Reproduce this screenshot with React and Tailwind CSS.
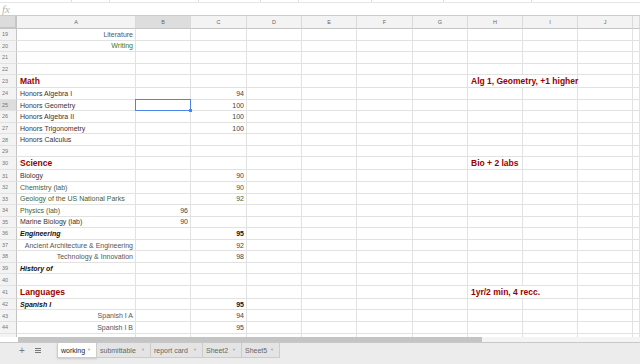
import React from "react";

const GRID =
  "grid grid-cols-[17px_119px_55px_56px_55px_55px_56px_55px_55px_55px_55px_7px]";
const LETTERS = ["A", "B", "C", "D", "E", "F", "G", "H", "I", "J", "K"];

const RED = "font-bold text-[8.5px] text-[#990000]";
const DARK = "text-[#3a3035]";
const GREEN = "text-[#44613a]";
const GRAY = "text-[#555555]";
const NUM = "text-[#444444]";

// row data: n = row number, tall = section heading row, spill = H text runs into I
const rows = [
  { n: 19, cells: { A: { t: "Literature", right: true, cls: GRAY } } },
  { n: 20, cells: { A: { t: "Writing", right: true, cls: "text-[#38761d]" } } },
  { n: 21 },
  { n: 22 },
  {
    n: 23,
    tall: true,
    spill: true,
    cells: {
      A: { t: "Math", cls: RED },
      H: { t: "Alg 1, Geometry, +1 higher", cls: RED },
    },
  },
  { n: 24, cells: { A: { t: "Honors Algebra I", cls: DARK }, C: { t: "94", right: true, cls: NUM } } },
  { n: 25, sel: true, cells: { A: { t: "Honors Geometry", cls: DARK }, C: { t: "100", right: true, cls: NUM } } },
  { n: 26, cells: { A: { t: "Honors Algebra II", cls: DARK }, C: { t: "100", right: true, cls: NUM } } },
  { n: 27, cells: { A: { t: "Honors Trigonometry", cls: DARK }, C: { t: "100", right: true, cls: NUM } } },
  { n: 28, cells: { A: { t: "Honors Calculus", cls: DARK } } },
  { n: 29 },
  {
    n: 30,
    tall: true,
    cells: {
      A: { t: "Science", cls: RED },
      H: { t: "Bio + 2 labs", cls: RED },
    },
  },
  { n: 31, cells: { A: { t: "Biology", cls: DARK }, C: { t: "90", right: true, cls: NUM } } },
  { n: 32, cells: { A: { t: "Chemistry (lab)", cls: GREEN }, C: { t: "90", right: true, cls: GREEN } } },
  { n: 33, cells: { A: { t: "Geology of the US National Parks", cls: GREEN }, C: { t: "92", right: true, cls: GREEN } } },
  { n: 34, cells: { A: { t: "Physics (lab)", cls: GREEN }, B: { t: "96", right: true, cls: NUM } } },
  { n: 35, cells: { A: { t: "Marine Biology (lab)", cls: DARK }, B: { t: "90", right: true, cls: NUM } } },
  {
    n: 36,
    cells: {
      A: { t: "Engineering", cls: "font-bold italic text-[#111111]" },
      C: { t: "95", right: true, cls: "font-bold text-[#111111]" },
    },
  },
  { n: 37, cells: { A: { t: "Ancient Architecture & Engineering", right: true, cls: GRAY }, C: { t: "92", right: true, cls: NUM } } },
  { n: 38, cells: { A: { t: "Technology & Innovation", right: true, cls: GRAY }, C: { t: "98", right: true, cls: NUM } } },
  { n: 39, cells: { A: { t: "History of", cls: "font-bold italic text-[#111111]" } } },
  { n: 40 },
  {
    n: 41,
    tall: true,
    spill: true,
    cells: {
      A: { t: "Languages", cls: RED },
      H: { t: "1yr/2 min, 4 recc.", cls: RED },
    },
  },
  {
    n: 42,
    cells: {
      A: { t: "Spanish I", cls: "font-bold italic text-[#111111]" },
      C: { t: "95", right: true, cls: "font-bold text-[#111111]" },
    },
  },
  { n: 43, cells: { A: { t: "Spanish I A", right: true, cls: GRAY }, C: { t: "94", right: true, cls: NUM } } },
  { n: 44, cells: { A: { t: "Spanish I B", right: true, cls: GRAY }, C: { t: "95", right: true, cls: NUM } } },
  { n: 45 },
];

function Row({ n, tall, spill, sel, cells = {} }) {
  return (
    <div className={`${GRID} ${tall ? "h-[13px]" : "h-[11.55px]"}`}>
      <div
        className={`flex items-center pl-[2px] border-r border-b border-r-[#c4c4c4] border-b-[#e2e2e2] text-[5.5px] text-[#777777] ${
          sel ? "bg-[#dddddd]" : "bg-[#f3f3f3]"
        }`}
      >
        {n < 45 ? n : ""}
      </div>
      {LETTERS.map((L) => {
        const c = cells[L];
        const rb = spill && L === "H" ? "border-r-0" : "border-r";
        const isSel = sel && L === "B";
        return (
          <div
            key={L}
            className={`relative flex items-center whitespace-nowrap overflow-visible leading-none text-[7px] border-b border-[#e2e2e2] ${rb} ${
              c && c.right ? "justify-end pr-[2px]" : "pl-[3px]"
            }`}
          >
            {c && <span className={`relative z-10 ${c.cls}`}>{c.t}</span>}
            {isSel && (
              <div className="absolute -left-px -top-px -right-px -bottom-px border border-[#4a86e8] z-20">
                <div className="absolute -right-[2px] -bottom-[2px] w-[3px] h-[3px] bg-[#4a86e8]" />
              </div>
            )}
          </div>
        );
      })}
    </div>
  );
}

function Tab({ label, active, w }) {
  return (
    <div
      className={`${w} h-[15px] flex items-center pl-[3px] border-r border-b border-[#cccccc] ${
        active ? "bg-white text-[#222222] shadow-[0_1px_2px_rgba(0,0,0,0.15)]" : "bg-[#e4e4e4] text-[#666666]"
      }`}
    >
      <span className="text-[7px] leading-none">{label}</span>
      <span className="ml-auto mr-[5px] text-[4px] text-[#aaaaaa] leading-none">▼</span>
    </div>
  );
}

export default function App() {
  return (
    <div className="w-[640px] h-[364px] overflow-hidden bg-white flex flex-col font-['Liberation_Sans',Arial,sans-serif]">
      {/* toolbar remnant */}
      <div className="h-[3px] flex border-b border-[#e6e6e6]">
        <div className="w-[72px] border-r border-[#e0e0e0]" />
        <div className="w-[38px] border-r border-[#e0e0e0]" />
        <div className="w-[89px] border-r border-[#e0e0e0]" />
        <div className="w-[62px] border-r border-[#e0e0e0]" />
        <div className="w-[38px] border-r border-[#e0e0e0]" />
        <div className="w-[73px] border-r border-[#e0e0e0]" />
        <div className="w-[72px] border-r border-[#e0e0e0]" />
        <div className="w-[88px] border-r border-[#e0e0e0]" />
        <div className="flex-1" />
      </div>

      {/* formula bar */}
      <div className="h-[12px] flex items-center pl-[2px]">
        <span className="font-['Liberation_Serif',serif] italic text-[11px] leading-none text-[#b5b5b5]">fx</span>
      </div>

      {/* column headers */}
      <div className={`${GRID} h-[14px] bg-[#f3f3f3] border-t border-[#cccccc]`}>
        <div className="bg-[#dcdcdc] border-r-2 border-b-2 border-[#c6c6c6]" />
        {LETTERS.map((L) => (
          <div
            key={L}
            className={`flex items-center justify-center border-r border-b border-r-[#dadada] border-b-[#c6c6c6] text-[5.5px] text-[#666666] ${
              L === "B" ? "bg-[#dddddd]" : ""
            }`}
          >
            {L === "K" ? "" : L}
          </div>
        ))}
      </div>

      {/* body */}
      <div className="flex-1 overflow-hidden">
        {rows.map((r) => (
          <Row key={r.n} {...r} />
        ))}
      </div>

      {/* horizontal scrollbar */}
      <div className="h-[5px] flex bg-[#f4f4f4]">
        <div className="w-[18px] bg-white" />
        <div className="w-[464px] bg-[#c4c4c4]" />
      </div>

      {/* sheet tabs */}
      <div className="h-[22px] flex items-start bg-[#ececec] border-t border-[#c8c8c8]">
        <div className="w-[57px] h-[15px] flex items-center">
          <span className="ml-[19px] text-[10px] leading-none text-[#777777]">+</span>
          <svg className="ml-[10px]" width="6" height="5" viewBox="0 0 6 5">
            <rect x="0" y="0" width="6" height="1" fill="#777777" />
            <rect x="0" y="2" width="6" height="1" fill="#777777" />
            <rect x="0" y="4" width="6" height="1" fill="#777777" />
          </svg>
        </div>
        <Tab label="working" active w="w-[40px] border-l" />
        <Tab label="submittable" w="w-[54px]" />
        <Tab label="report card" w="w-[52px]" />
        <Tab label="Sheet2" w="w-[39px]" />
        <Tab label="Sheet5" w="w-[38px]" />
      </div>
    </div>
  );
}
